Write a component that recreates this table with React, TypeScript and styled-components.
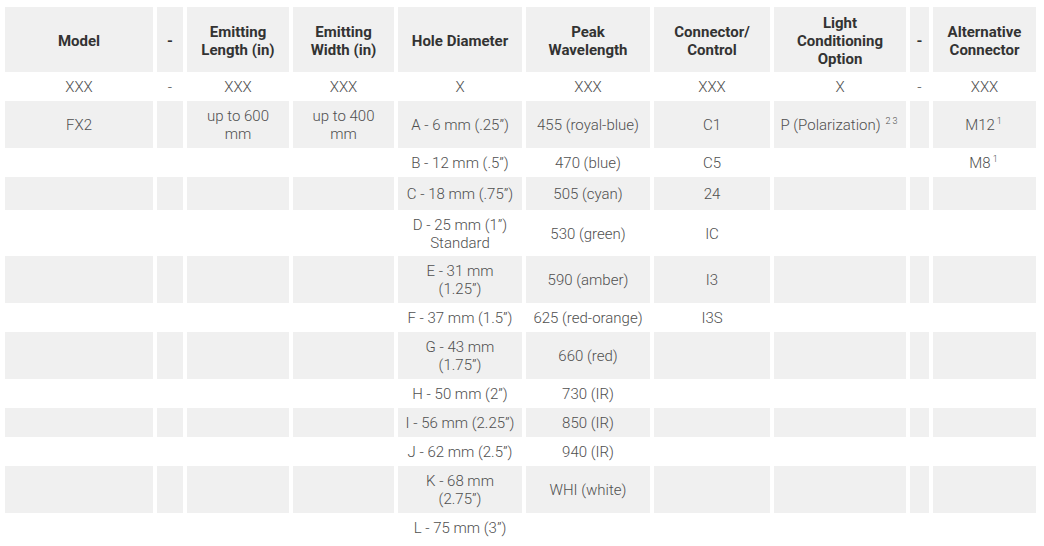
import styled, { createGlobalStyle } from "styled-components";
import React from "react";

const GlobalStyle = createGlobalStyle`
  body {
    margin: 0;
    background: #fff;
    font-family: Roboto, "Liberation Sans", sans-serif;
  }
`;

const Wrapper = styled.div`
  padding: 3px 0 0 1px;
`;

const Table = styled.table`
  table-layout: fixed;
  width: 1039px;
  border-collapse: separate;
  border-spacing: 4px;
`;

const Row = styled.tr<{ $h: number; $shaded?: boolean }>`
  height: ${({ $h }) => $h}px;

  td,
  th {
    background: ${({ $shaded }) => ($shaded ? "#f0f0f0" : "#fff")};
  }
`;

const HeadCell = styled.th`
  padding: 2px 0 0;
  text-align: center;
  vertical-align: middle;
  font-size: 15px;
  line-height: 18px;
  font-weight: 700;
  color: #333;
  white-space: nowrap;
`;

const Cell = styled.td`
  padding: 1px 0 0;
  text-align: center;
  vertical-align: middle;
  font-size: 15px;
  line-height: 18px;
  font-weight: 300;
  color: #4f4f4f;
  white-space: nowrap;
`;

const Note = styled.sup<{ $gap?: number }>`
  font-size: 9px;
  line-height: 0;
  margin-left: ${({ $gap }) => $gap ?? 2}px;
  vertical-align: 6px;
  letter-spacing: 2px;
`;

const widths = [148, 26, 102, 101, 124, 124, 116, 132, 19, 103];

const headers: React.ReactNode[] = [
  "Model",
  "-",
  <>Emitting<br />Length (in)</>,
  <>Emitting<br />Width (in)</>,
  "Hole Diameter",
  <>Peak<br />Wavelength</>,
  <>Connector/<br />Control</>,
  <>Light<br />Conditioning<br />Option</>,
  "-",
  <>Alternative<br />Connector</>,
];

type RowData = { h: number; cells: React.ReactNode[] };

const rows: RowData[] = [
  { h: 21, cells: ["XXX", "-", "XXX", "XXX", "X", "XXX", "XXX", "X", "-", "XXX"] },
  {
    h: 47,
    cells: [
      "FX2",
      "",
      <>up to 600<br />mm</>,
      <>up to 400<br />mm</>,
      "A - 6 mm (.25”)",
      "455 (royal-blue)",
      "C1",
      <>P (Polarization)<Note $gap={5}>23</Note></>,
      "",
      <>M12<Note>1</Note></>,
    ],
  },
  { h: 21, cells: ["", "", "", "", "B - 12 mm (.5”)", "470 (blue)", "C5", "", "", <>M8<Note>1</Note></>] },
  { h: 33, cells: ["", "", "", "", "C - 18 mm (.75”)", "505 (cyan)", "24", "", "", ""] },
  { h: 38, cells: ["", "", "", "", <>D - 25 mm (1”)<br />Standard</>, "530 (green)", "IC", "", "", ""] },
  { h: 47, cells: ["", "", "", "", <>E - 31 mm<br />(1.25”)</>, "590 (amber)", "I3", "", "", ""] },
  { h: 21, cells: ["", "", "", "", "F - 37 mm (1.5”)", "625 (red-orange)", "I3S", "", "", ""] },
  { h: 47, cells: ["", "", "", "", <>G - 43 mm<br />(1.75”)</>, "660 (red)", "", "", "", ""] },
  { h: 21, cells: ["", "", "", "", "H - 50 mm (2”)", "730 (IR)", "", "", "", ""] },
  { h: 29, cells: ["", "", "", "", "I - 56 mm (2.25”)", "850 (IR)", "", "", "", ""] },
  { h: 21, cells: ["", "", "", "", "J - 62 mm (2.5”)", "940 (IR)", "", "", "", ""] },
  { h: 47, cells: ["", "", "", "", <>K - 68 mm<br />(2.75”)</>, "WHI (white)", "", "", "", ""] },
  { h: 21, cells: ["", "", "", "", "L - 75 mm (3”)", "", "", "", "", ""] },
];

export default function App() {
  return (
    <>
      <GlobalStyle />
      <Wrapper>
        <Table>
          <colgroup>
            {widths.map((w, i) => (
              <col key={i} style={{ width: w }} />
            ))}
          </colgroup>
          <thead>
            <Row $h={65} $shaded>
              {headers.map((h, i) => (
                <HeadCell key={i}>{h}</HeadCell>
              ))}
            </Row>
          </thead>
          <tbody>
            {rows.map((r, i) => (
              <Row key={i} $h={r.h} $shaded={i % 2 === 1}>
                {r.cells.map((c, j) => (
                  <Cell key={j}>{c}</Cell>
                ))}
              </Row>
            ))}
          </tbody>
        </Table>
      </Wrapper>
    </>
  );
}
